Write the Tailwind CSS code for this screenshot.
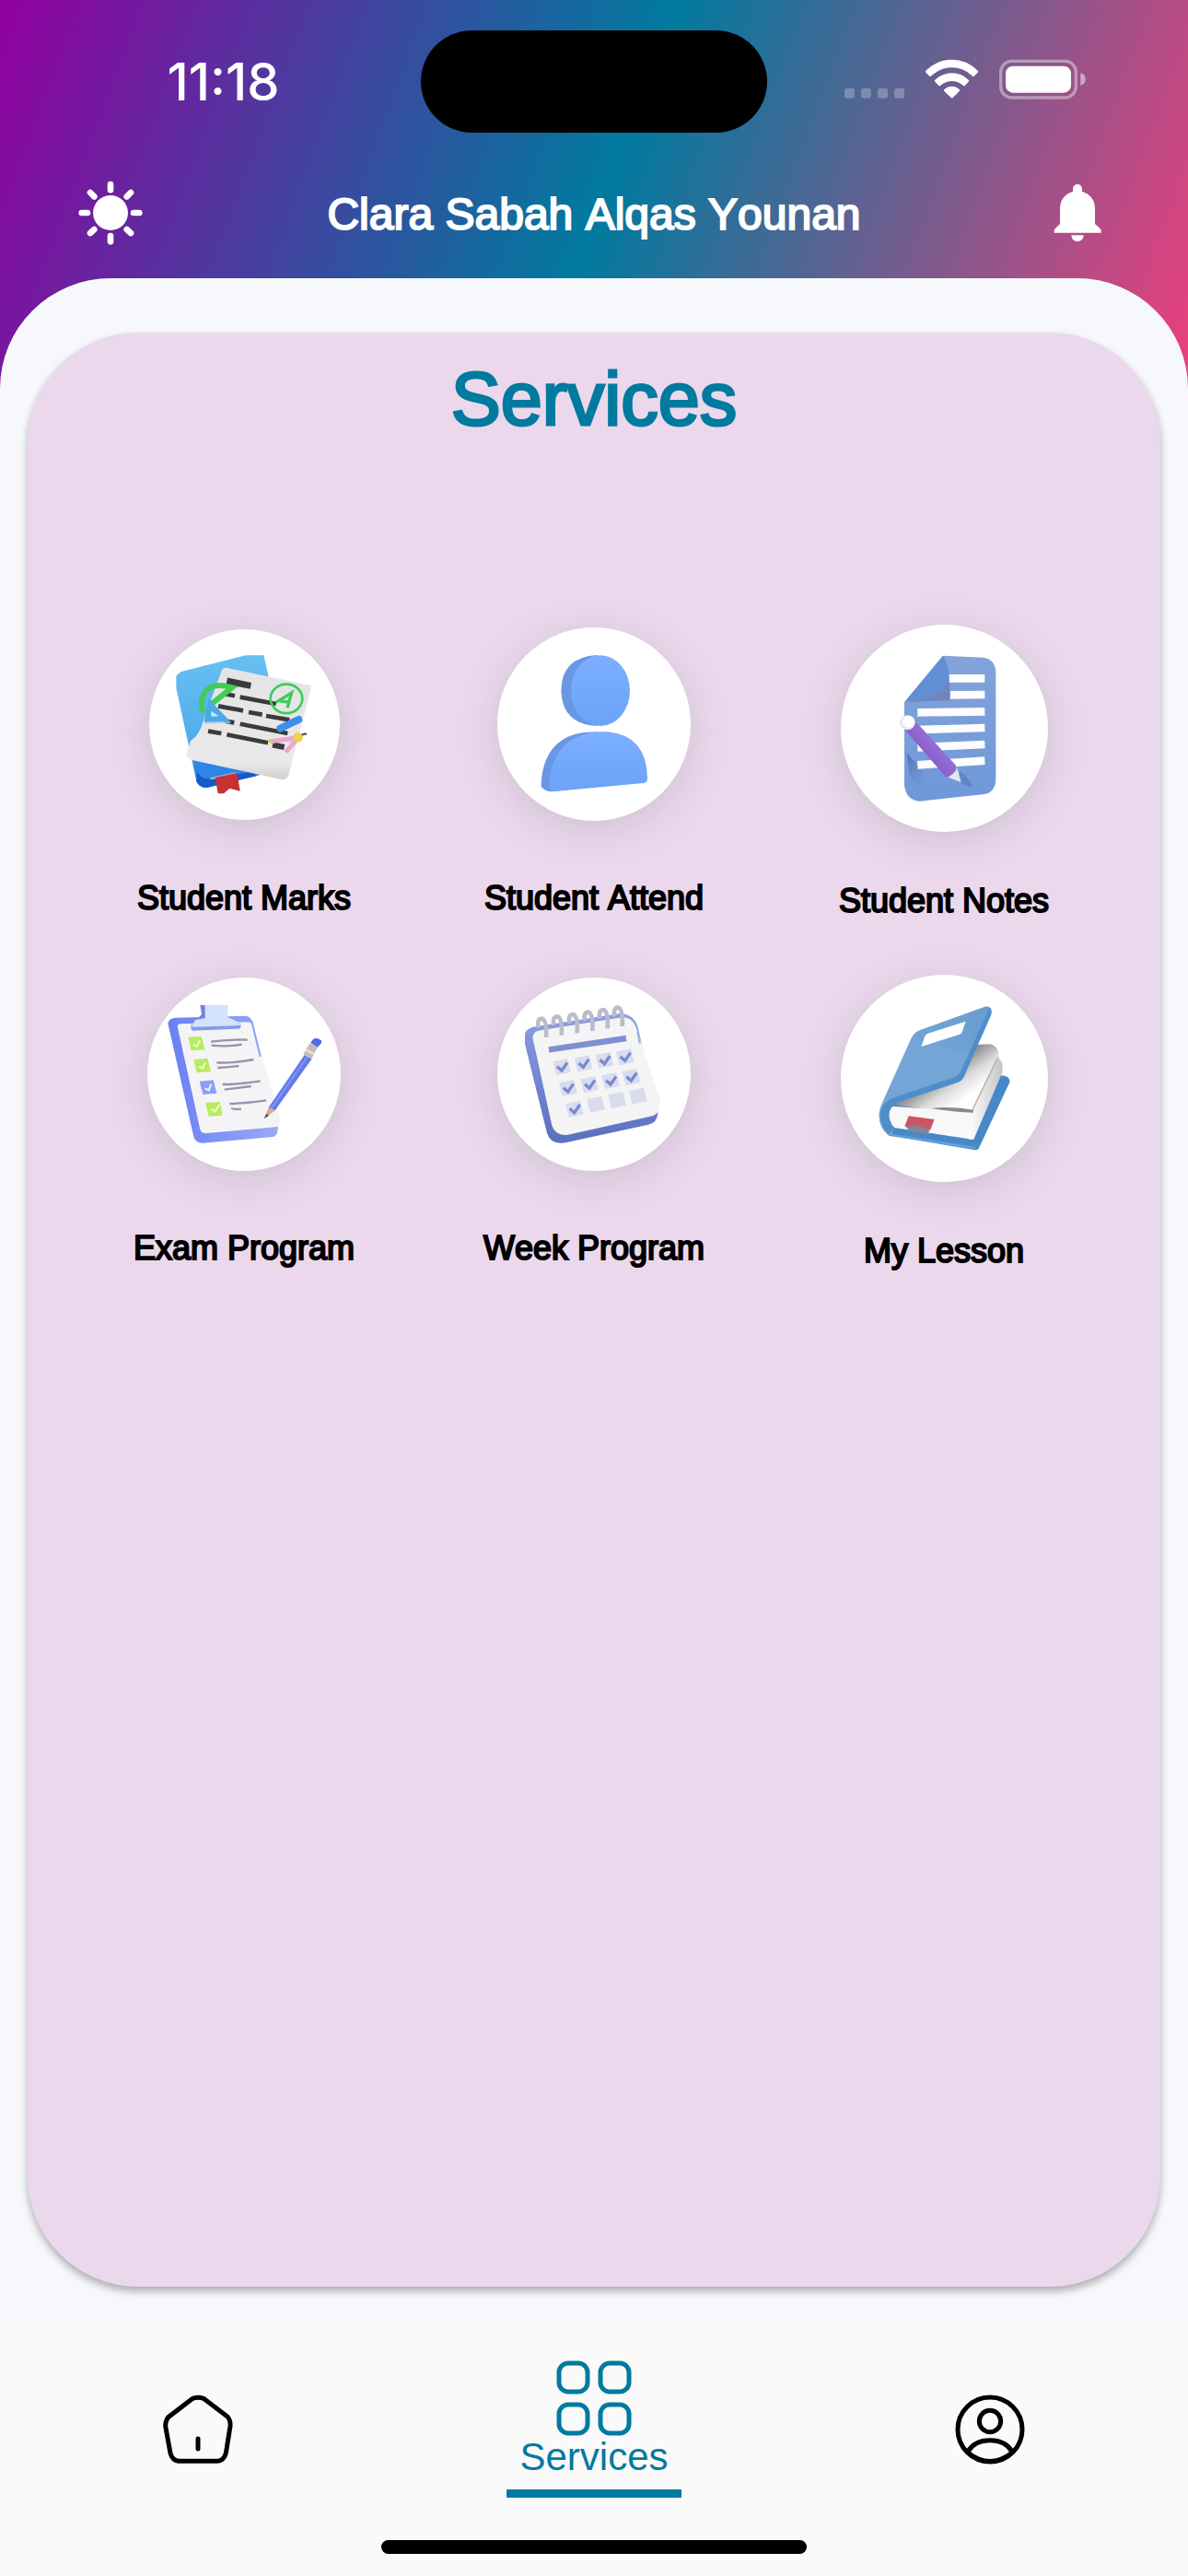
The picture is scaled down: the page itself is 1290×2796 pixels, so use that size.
<!DOCTYPE html>
<html lang="en">
<head>
    <meta charset="UTF-8">
    <meta name="viewport" content="width=device-width, initial-scale=1.0">
    <title>Services</title>
    <!-- Tailwind CSS for styling -->
    <script src="https://cdn.jsdelivr.net/npm/@tailwindcss/browser@4"></script>
</head>
<body class="min-h-screen flex flex-col bg-[#f6f8fc] bg-[linear-gradient(110.4deg,#92009f_0%,#007a9f_50%,#f43c7c_100%)] bg-[length:100%_480px] bg-no-repeat font-['Liberation_Sans',sans-serif] text-black [font-kerning:none]">

    <!-- Status bar -->
    <div class="flex h-[160px] items-start pt-[33px] text-white">
        <div class="flex h-[111px] flex-1 items-center justify-center pl-7 font-['Inter',sans-serif] text-[56px] font-medium">11:18</div>
        <div class="h-[111px] w-[376px] rounded-full bg-black"></div>
        <div class="flex h-[111px] flex-1 items-start justify-center pt-[31px] pr-7">
            <svg class="h-11 w-[264px]" viewBox="105 73 792 132" fill="#fff">
                <g opacity=".25">
                    <rect x="108" y="168" width="33" height="33" rx="9"/>
                    <rect x="162" y="168" width="33" height="33" rx="9"/>
                    <rect x="216" y="168" width="33" height="33" rx="9"/>
                    <rect x="270" y="168" width="33" height="33" rx="9"/>
                </g>
                <path d="M373 111Q410 75 458 75T542 111Q545 114 542 117L530 129Q527 131 524 128Q495 101 458 101T391 128Q388 131 385 129L373 117Q370 114 373 111Z"/>
                <path d="M403 141Q427 119 458 119T512 141Q515 144 512 147L500 160Q497 162 494 159Q477 145 458 145T421 159Q418 162 415 160L403 147Q400 144 403 141Z"/>
                <path d="M433 172Q444 162 458 162T482 172Q485 175 482 178L461 199Q458 202 455 199L433 178Q430 175 433 172Z"/>
                <rect x="617" y="80" width="245" height="119" rx="36" fill="none" stroke="#fff" stroke-opacity=".4" stroke-width="10"/>
                <rect x="633" y="96" width="213" height="87" rx="24"/>
                <path d="M877 119Q893 124 893 139T877 160Z" opacity=".5"/>
            </svg>
        </div>
    </div>

    <!-- App bar -->
    <header class="flex h-[142px] items-center justify-between px-[75px] text-white">
        <button type="button" aria-label="Toggle theme" class="size-[90px]">
            <svg class="size-full" viewBox="45 436 270 270">
                <circle cx="180" cy="571" r="57" fill="#fff"/>
                <path d="M180 478V497M180 646V665M86 571H105M255 571H274M114 505L127 518M246 505L233 518M114 637L127 625M246 637L233 625" stroke="#fff" stroke-width="20" stroke-linecap="round"/>
            </svg>
        </button>
        <h1 class="pt-1 text-[48px] leading-[60px] [-webkit-text-stroke:2px_currentColor]">Clara Sabah Alqas Younan</h1>
        <button type="button" aria-label="Notifications" class="size-[90px]">
            <svg class="size-full" viewBox="735 438 270 270" fill="#fff">
                <path d="M855 503V495A15 15 0 0 1 885 495V503Q927 518 927 560V609L944 625Q947 628 947 631V638H794V631Q794 628 797 625L813 609V560Q813 518 855 503Z"/>
                <path d="M850 646H890Q889 666 870 666T850 646Z"/>
            </svg>
        </button>
    </header>

    <main class="flex flex-1 flex-col rounded-t-[120px] bg-[#f6f8fc] px-[30px] pt-[59px] pb-[34px]">
        <section class="flex-1 rounded-[120px] bg-[#ebd8ed] px-[45px] pt-6 shadow-[0_5px_9px_rgba(0,0,0,0.3)]">
            <h2 class="text-center text-[81px] leading-[96px] text-[#007a9f] [-webkit-text-stroke:3px_currentColor]">Services</h2>

            <div class="mt-[195px] grid auto-rows-[380px] grid-cols-3 text-[36px] leading-[54px]">
                <!-- Student Marks -->
                <a href="#marks" class="flex flex-col items-center gap-[52px]">
                    <span class="flex h-[220px] items-center">
                        <svg class="size-[207px] rounded-full bg-white shadow-[0_9px_45px_rgba(0,0,0,0.12)]" viewBox="65 68 621 621">
                            <defs>
                                <linearGradient id="folder" x1="0" y1="0" x2="0" y2="1">
                                    <stop offset="0" stop-color="#66c0f2"/>
                                    <stop offset=".7" stop-color="#4fabea"/>
                                    <stop offset="1" stop-color="#1c66d4"/>
                                </linearGradient>
                                <linearGradient id="paper" x1="0" y1="0" x2="0" y2="1">
                                    <stop offset="0" stop-color="#e4e4e4"/>
                                    <stop offset=".85" stop-color="#e9e9e9"/>
                                    <stop offset="1" stop-color="#cfcfcf"/>
                                </linearGradient>
                            </defs>
                            <path d="M153 222Q160 208 178 204L380 153H438L500 420L530 500L520 520L250 584Q226 582 219 562L153 260Z" fill="url(#folder)"/>
                            <path d="M212 495L410 545L254 584Q226 582 219 562Z" fill="#2d85e8"/>
                            <path d="M222 528Q226 556 262 556L400 532L414 546L254 583Q226 582 219 562Z" fill="#1759c8"/>
                            <path d="M262 552L345 534L352 541L268 558Z" fill="#a9b4c6"/>
                            <path d="M280 551L352 536L361 595L327 586L308 603H289Z" fill="#c43234"/>
                            <path d="M302 200Q308 192 320 194L594 252L520 540Q515 560 495 557L205 494Q184 488 188 470L200 432Q230 410 240 370Z" fill="url(#paper)"/>
                            <g stroke="#3a3a3a" stroke-width="14">
                                <path d="M318 236L396 252" stroke-width="21"/>
                                <path d="M308 278L344 285M361 289L478 311M290 318L371 333M389 338L433 346M446 350L522 363M310 366L342 372M361 376L516 407M257 400L300 407M318 411L452 438"/>
                                <path d="M467 444L505 452" stroke-width="19"/>
                            </g>
                            <path d="M240 338Q228 295 250 268Q280 240 335 258L270 310" fill="none" stroke="#42cc56" stroke-width="18"/>
                            <path d="M258 294L330 369L244 370Z" fill="#4aa9e6"/>
                            <path d="M266 334L292 351L268 352Z" fill="#d7e9f7"/>
                            <path d="M330 371L244 372" stroke="#a9c6e4" stroke-width="5"/>
                            <ellipse cx="512" cy="294" rx="52" ry="47" fill="none" stroke="#40cb5a" stroke-width="8"/>
                            <path d="M478 306L529 275L515 324M492 302L520 305" fill="none" stroke="#40cb5a" stroke-width="10"/>
                            <path d="M492 391L552 362" stroke="#3d8eea" stroke-width="24" stroke-linecap="round"/>
                            <path d="M460 433L545 422M548 424L510 468" stroke="#eba6cd" stroke-width="15"/>
                            <circle cx="550" cy="420" r="16" fill="#ead648"/>
                            <circle cx="460" cy="432" r="7" fill="#e3c64a"/>
                            <path d="M562 411L578 408" stroke="#555" stroke-width="7"/>
                        </svg>
                    </span>
                    <span class="[-webkit-text-stroke:2px_currentColor]">Student Marks</span>
                </a>

                <!-- Student Attend -->
                <a href="#attend" class="flex flex-col items-center gap-[52px]">
                    <span class="flex h-[220px] items-center">
                        <svg class="size-[210px] rounded-full bg-white shadow-[0_9px_45px_rgba(0,0,0,0.12)]" viewBox="60 63 630 630">
                            <defs>
                                <linearGradient id="person" x1="0" y1="0" x2="0" y2="1">
                                    <stop offset="0" stop-color="#7cafff"/>
                                    <stop offset="1" stop-color="#6ba3f7"/>
                                </linearGradient>
                            </defs>
                            <path d="M385 153Q268 160 268 270Q272 378 385 384Z" fill="#6897e4"/>
                            <path d="M350 404Q215 418 203 565V582Q215 596 236 598L390 580V403Z" fill="#6897e4"/>
                            <ellipse cx="396" cy="269" rx="96" ry="115" fill="url(#person)"/>
                            <path d="M385 403H420Q547 415 549 555Q549 568 536 570L236 598Q228 590 229 565Q245 418 385 403Z" fill="url(#person)"/>
                        </svg>
                    </span>
                    <span class="[-webkit-text-stroke:2px_currentColor]">Student Attend</span>
                </a>

                <!-- Student Notes -->
                <a href="#notes" class="flex flex-col items-center gap-12 pt-0.5">
                    <svg class="size-[225px] rounded-full bg-white shadow-[0_9px_45px_rgba(0,0,0,0.12)]" viewBox="67 52 675 675">
                        <defs>
                            <linearGradient id="note" x1="0" y1="0" x2="0" y2="1">
                                <stop offset="0" stop-color="#83a3da"/>
                                <stop offset="1" stop-color="#6f98d9"/>
                            </linearGradient>
                            <linearGradient id="shade" x1="0" y1="0" x2="1" y2="1">
                                <stop offset="0" stop-color="#4a72b4"/>
                                <stop offset="1" stop-color="#6f98d9" stop-opacity="0"/>
                            </linearGradient>
                            <linearGradient id="pen" x1="0" y1="1" x2="1" y2="0">
                                <stop offset=".3" stop-color="#8257c6"/>
                                <stop offset=".7" stop-color="#9a76dc"/>
                            </linearGradient>
                        </defs>
                        <path d="M400 153L532 159Q571 165 572 208V556Q570 598 535 604L325 627Q280 625 274 575V304Z" fill="url(#note)"/>
                        <path d="M400 155Q412 180 421 215V298L290 304Z" fill="#6d86bb"/>
                        <path d="M400 153Q432 215 408 255Q375 290 276 303Z" fill="#618fd6"/>
                        <path d="M282 470Q330 520 362 575Q320 590 290 540Z" fill="url(#shade)"/>
                        <path d="M455 530Q480 545 498 580Q470 580 450 560Z" fill="#5379b6" opacity=".6"/>
                        <g stroke="#fdfdff" stroke-width="26">
                            <path d="M420 227L536 227M424 281L536 280M317 338L536 335M317 394L536 388M317 452L536 442M317 509L536 495"/>
                        </g>
                        <path d="M276 395L308 364L442 510Q448 530 415 549Q405 545 395 532Z" fill="url(#pen)"/>
                        <path d="M444 512Q450 530 416 549L459 565Z" fill="#e4e5ee"/>
                        <ellipse cx="284" cy="371" rx="25" ry="24" fill="#e6e8f2"/>
                        <ellipse cx="288" cy="368" rx="20" ry="19" fill="#fff"/>
                    </svg>
                    <span class="[-webkit-text-stroke:2px_currentColor]">Student Notes</span>
                </a>

                <!-- Exam Program -->
                <a href="#exam" class="flex flex-col items-center gap-[52px]">
                    <span class="flex h-[220px] items-center">
                        <svg class="size-[210px] rounded-full bg-white shadow-[0_9px_45px_rgba(0,0,0,0.12)]" viewBox="60 63 630 630">
                            <defs>
                                <linearGradient id="board" x1="0" y1="0" x2="1" y2="0">
                                    <stop offset="0" stop-color="#6a80f4"/>
                                    <stop offset="1" stop-color="#9aa9fb"/>
                                </linearGradient>
                            </defs>
                            <path d="M127 212Q130 196 150 194L380 188Q398 190 402 208L486 545Q486 578 470 582L240 602Q218 602 211 582Z" fill="url(#board)"/>
                            <path d="M158 222Q158 214 170 214L388 208Q396 208 398 214L492 520Q496 545 478 550L250 570Q236 570 232 558Z" fill="#f4f4f6"/>
                            <path d="M404 210L492 525L470 500L392 212Z" fill="#f4f4f6"/>
                            <path d="M400 205L428 320" stroke="#8da0fa" stroke-width="6"/>
                            <path d="M232 153H262V200L225 196L237 183Z" fill="#6d84e2"/>
                            <path d="M203 216H364V226Q364 230 355 230L208 236Q200 234 203 216Z" fill="#8799e8"/>
                            <path d="M248 153H322V192L366 212L360 219L205 224L215 202L248 195Z" fill="#d3e2fe"/>
                            <g fill="#b7ec5c">
                                <path d="M193 257L236 255L248 298L203 301Z"/>
                                <path d="M211 330L256 326L267 369L221 373Z"/>
                                <path d="M249 471L297 468L305 512L260 515Z"/>
                            </g>
                            <path d="M230 401L275 397L286 440L241 444Z" fill="#8b9efa"/>
                            <path d="M210 280L221 288L231 268M228 352L240 359L249 340M248 424L260 430L268 410M268 492L280 500L296 476" fill="none" stroke="#e9fbe0" stroke-width="6"/>
                            <path d="M267 272Q320 264 386 266M269 284Q320 289 368 281M286 340Q340 343 406 330M289 357Q320 355 358 351M305 411Q360 411 428 400M311 428Q350 423 398 417M328 474Q390 472 447 463M333 489Q345 493 366 491" fill="none" stroke="#9893ab" stroke-width="7"/>
                            <path d="M455 486L572 315L596 328L476 496Z" fill="#6379ea"/>
                            <path d="M463 490L582 320" stroke="#8294f5" stroke-width="6"/>
                            <path d="M568 312L590 276L616 288L594 329Z" fill="#c8bcb8"/>
                            <path d="M576 298L602 312" stroke="#eee4e0" stroke-width="6"/>
                            <path d="M597 268Q606 252 627 268V276L615 290L592 275Z" fill="#4d6cec"/>
                            <path d="M455 486L476 496L441 522Z" fill="#dba68e"/>
                            <path d="M448 507L456 512L440 523Z" fill="#444"/>
                        </svg>
                    </span>
                    <span class="[-webkit-text-stroke:2px_currentColor]">Exam Program</span>
                </a>

                <!-- Week Program -->
                <a href="#week" class="flex flex-col items-center gap-[52px]">
                    <span class="flex h-[220px] items-center">
                        <svg class="size-[210px] rounded-full bg-white shadow-[0_9px_45px_rgba(0,0,0,0.12)]" viewBox="60 63 630 630">
                            <defs>
                                <linearGradient id="calendar" x1="0" y1="0" x2="0" y2="1">
                                    <stop offset="0" stop-color="#8c9ee2"/>
                                    <stop offset="1" stop-color="#5a70bf"/>
                                </linearGradient>
                            </defs>
                            <path d="M150 245Q158 225 190 222L460 180Q505 182 518 225L583 505Q580 538 552 542L285 600Q235 610 222 570L150 280Z" fill="url(#calendar)"/>
                            <path d="M175 258Q178 236 205 234L470 192Q502 194 512 225L590 460Q594 505 565 514L290 575Q250 580 238 545Z" fill="#f4f4f5"/>
                            <path d="M517 240L524 278" stroke="#9dade9" stroke-width="6"/>
                            <path d="M228 298L480 261" stroke="#7f90d2" stroke-width="19"/>
                            <g fill="none" stroke="#b9bccb" stroke-width="14">
                                <path id="ring" d="M194 226Q188 197 206 197Q222 202 219 258"/>
                                <use href="#ring" x="50" y="-7"/>
                                <use href="#ring" x="101" y="-14"/>
                                <use href="#ring" x="151" y="-21"/>
                                <use href="#ring" x="200" y="-29"/>
                                <use href="#ring" x="248" y="-36"/>
                            </g>
                            <g fill="#d9dcef">
                                <path id="day" d="M241 337L289 327L300 371L252 381Z"/>
                                <use href="#day" x="70" y="-11"/>
                                <use href="#day" x="139" y="-22"/>
                                <use href="#day" x="206" y="-32"/>
                                <use href="#day" x="20" y="69"/>
                                <use href="#day" x="90" y="57"/>
                                <use href="#day" x="159" y="45"/>
                                <use href="#day" x="226" y="33"/>
                                <use href="#day" x="41" y="137"/>
                                <use href="#day" x="111" y="122"/>
                                <use href="#day" x="180" y="108"/>
                                <use href="#day" x="248" y="95"/>
                            </g>
                            <g fill="none" stroke="#7a89cd" stroke-width="10">
                                <path id="tick" d="M255 353L270 366L288 340"/>
                                <use href="#tick" x="70" y="-11"/>
                                <use href="#tick" x="139" y="-22"/>
                                <use href="#tick" x="206" y="-32"/>
                                <use href="#tick" x="20" y="69"/>
                                <use href="#tick" x="90" y="57"/>
                                <use href="#tick" x="159" y="45"/>
                                <use href="#tick" x="226" y="33"/>
                                <use href="#tick" x="41" y="137"/>
                            </g>
                        </svg>
                    </span>
                    <span class="[-webkit-text-stroke:2px_currentColor]">Week Program</span>
                </a>

                <!-- My Lesson -->
                <a href="#lesson" class="flex flex-col items-center gap-12 pt-0.5">
                    <svg class="size-[225px] rounded-full bg-white shadow-[0_9px_45px_rgba(0,0,0,0.12)]" viewBox="67 52 675 675">
                        <defs>
                            <linearGradient id="cover" x1="1" y1="0" x2="0" y2="1">
                                <stop offset="0" stop-color="#689cd2"/>
                                <stop offset="1" stop-color="#7caddb"/>
                            </linearGradient>
                            <linearGradient id="page" x1=".45" y1=".3" x2=".85" y2=".65">
                                <stop offset="0" stop-color="#6c6c6c"/>
                                <stop offset=".6" stop-color="#dcdcdc"/>
                                <stop offset="1" stop-color="#fff"/>
                            </linearGradient>
                            <linearGradient id="edge" x1="0" y1="0" x2="1" y2="0">
                                <stop offset="0" stop-color="#fdfdfd"/>
                                <stop offset="1" stop-color="#c4c4c4"/>
                            </linearGradient>
                        </defs>
                        <path d="M192 505Q195 470 235 468L590 380Q615 380 618 400L516 618Q510 624 500 622L225 575Q192 555 192 505Z" fill="#4788c6"/>
                        <path d="M223 572L505 616" stroke="#649fd6" stroke-width="8"/>
                        <path d="M236 475L505 280L555 278Q582 284 582 320L500 492L350 490Z" fill="url(#page)"/>
                        <path d="M232 480L320 486L495 498V588L240 550Q214 515 232 480Z" fill="#f8f8f8"/>
                        <path d="M495 498L578 320Q596 330 594 368L500 588H485Z" fill="url(#edge)"/>
                        <path d="M400 484Q450 482 500 492L497 501Q440 500 360 487Z" fill="#8a8a8a"/>
                        <path d="M497 490L578 322" stroke="#b5b5b5" stroke-width="5"/>
                        <path d="M288 512L372 523L358 558L275 546Z" fill="#cc5563"/>
                        <path d="M280 547Q320 535 356 560L350 572L290 562Z" fill="#7d8798"/>
                        <path d="M540 155Q560 155 559 175L468 385Q462 398 445 403L270 462Q225 475 222 510Q222 535 240 548L232 574Q190 555 192 505Q194 480 205 462L295 262Q305 240 325 232Z" fill="url(#cover)"/>
                        <path d="M557 182L466 387Q460 398 445 403L270 462Q225 475 222 510Q222 535 240 548L228 572Q192 550 196 500Q205 460 250 448L440 385Q452 380 457 370L550 160Z" fill="#4e8eca"/>
                        <path d="M205 464L440 380Q450 378 455 366L480 310L300 262Z" fill="#73a5d7"/>
                        <path d="M351 243L474 204L462 239Q459 246 450 248L329 286L341 252Q344 246 351 243Z" fill="#fff"/>
                    </svg>
                    <span class="[-webkit-text-stroke:2px_currentColor]">My Lesson</span>
                </a>
            </div>
        </section>
    </main>

    <!-- Bottom navigation -->
    <nav class="flex flex-col items-center bg-[#fafafa] pb-6">
        <div class="grid h-[241px] w-full grid-cols-3 items-center justify-items-center">
            <a href="#home" aria-label="Home">
                <svg class="size-[90px]" viewBox="31 160 270 270" fill="none" stroke="#000" stroke-width="15" stroke-linecap="round">
                    <path d="M149 194Q166 188 184 194L262 253Q273 266 271 284L257 372Q250 396 230 398H102Q82 395 76 372L60 284Q60 266 69 255Z"/>
                    <path d="M166 325V358"/>
                </svg>
            </a>
            <a href="#services" aria-current="page" class="flex flex-col items-center text-[#007a9f]">
                <svg class="size-[82px]" viewBox="0 0 82 82" fill="none" stroke="currentColor" stroke-width="5">
                    <rect x="3" y="3" width="31" height="31" rx="10"/>
                    <rect x="48" y="3" width="31" height="31" rx="10"/>
                    <rect x="3" y="48" width="31" height="31" rx="10"/>
                    <rect x="48" y="48" width="31" height="31" rx="10"/>
                </svg>
                <span class="text-[42px] leading-[46px]">Services</span>
                <span class="mt-3 h-[9px] w-[190px] bg-[#007a9f]"></span>
            </a>
            <a href="#profile" aria-label="Profile">
                <svg class="size-[90px]" viewBox="31 160 270 270" fill="none" stroke="#000" stroke-width="15">
                    <circle cx="166" cy="295" r="105"/>
                    <circle cx="166" cy="268" r="35"/>
                    <path d="M94 367Q115 330 166 330T238 367"/>
                    <path d="M96 370Q166 424 236 370" stroke-width="12"/>
                </svg>
            </a>
        </div>
        <div class="h-[15px] w-[462px] rounded-full bg-black"></div>
    </nav>

</body>
</html>
